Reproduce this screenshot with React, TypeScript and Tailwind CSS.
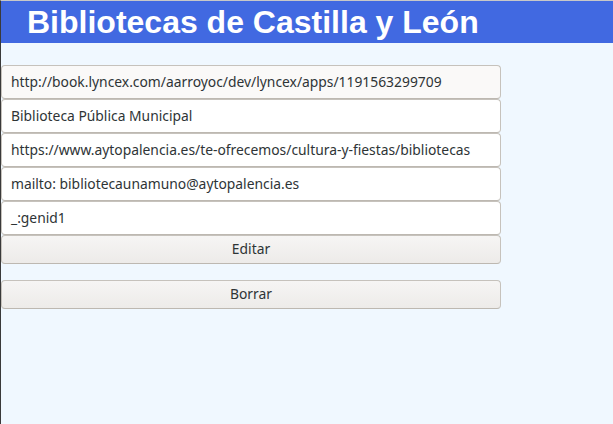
import React from "react";

const fields = [
  "http://book.lyncex.com/aarroyoc/dev/lyncex/apps/1191563299709",
  "Biblioteca Pública Municipal",
  "https://www.aytopalencia.es/te-ofrecemos/cultura-y-fiestas/bibliotecas",
  "mailto: bibliotecaunamuno@aytopalencia.es",
  "_:genid1",
];

export default function App() {
  return (
    <div className="w-[613px] h-[424px] bg-[#f0f8ff] border-l border-l-[#3a3a3a] border-t border-t-[#c8c8c8] overflow-hidden">
      <div className="h-[42px] bg-[#4169e1] flex items-center pl-[26px]">
        <h1 className="text-white font-bold text-[32px] leading-none font-['Liberation_Sans',Arial,sans-serif]">
          Bibliotecas de Castilla y León
        </h1>
      </div>
      <div className="w-[500px] pt-[22px] flex flex-col font-['Noto_Sans',sans-serif] text-[13.85px] text-[#2e3436]">
        {fields.map((f, i) => (
          <div
            key={i}
            className={`h-[34px] flex items-center pl-[9px] border border-[#c6c2bc] border-b-[#bdb8b1] rounded-[4px] ${i === 0 ? "bg-[#faf9f8]" : "bg-white"}`}
          >
            {f}
          </div>
        ))}
        <button className="h-[29px] border border-[#c6c2bc] border-b-[#bdb8b1] rounded-[4px] bg-gradient-to-b from-[#f6f5f4] to-[#edebe9] text-[#2e3436]">
          Editar
        </button>
        <button className="mt-[16px] h-[29px] border border-[#c6c2bc] border-b-[#bdb8b1] rounded-[4px] bg-gradient-to-b from-[#f6f5f4] to-[#edebe9] text-[#2e3436]">
          Borrar
        </button>
      </div>
    </div>
  );
}
